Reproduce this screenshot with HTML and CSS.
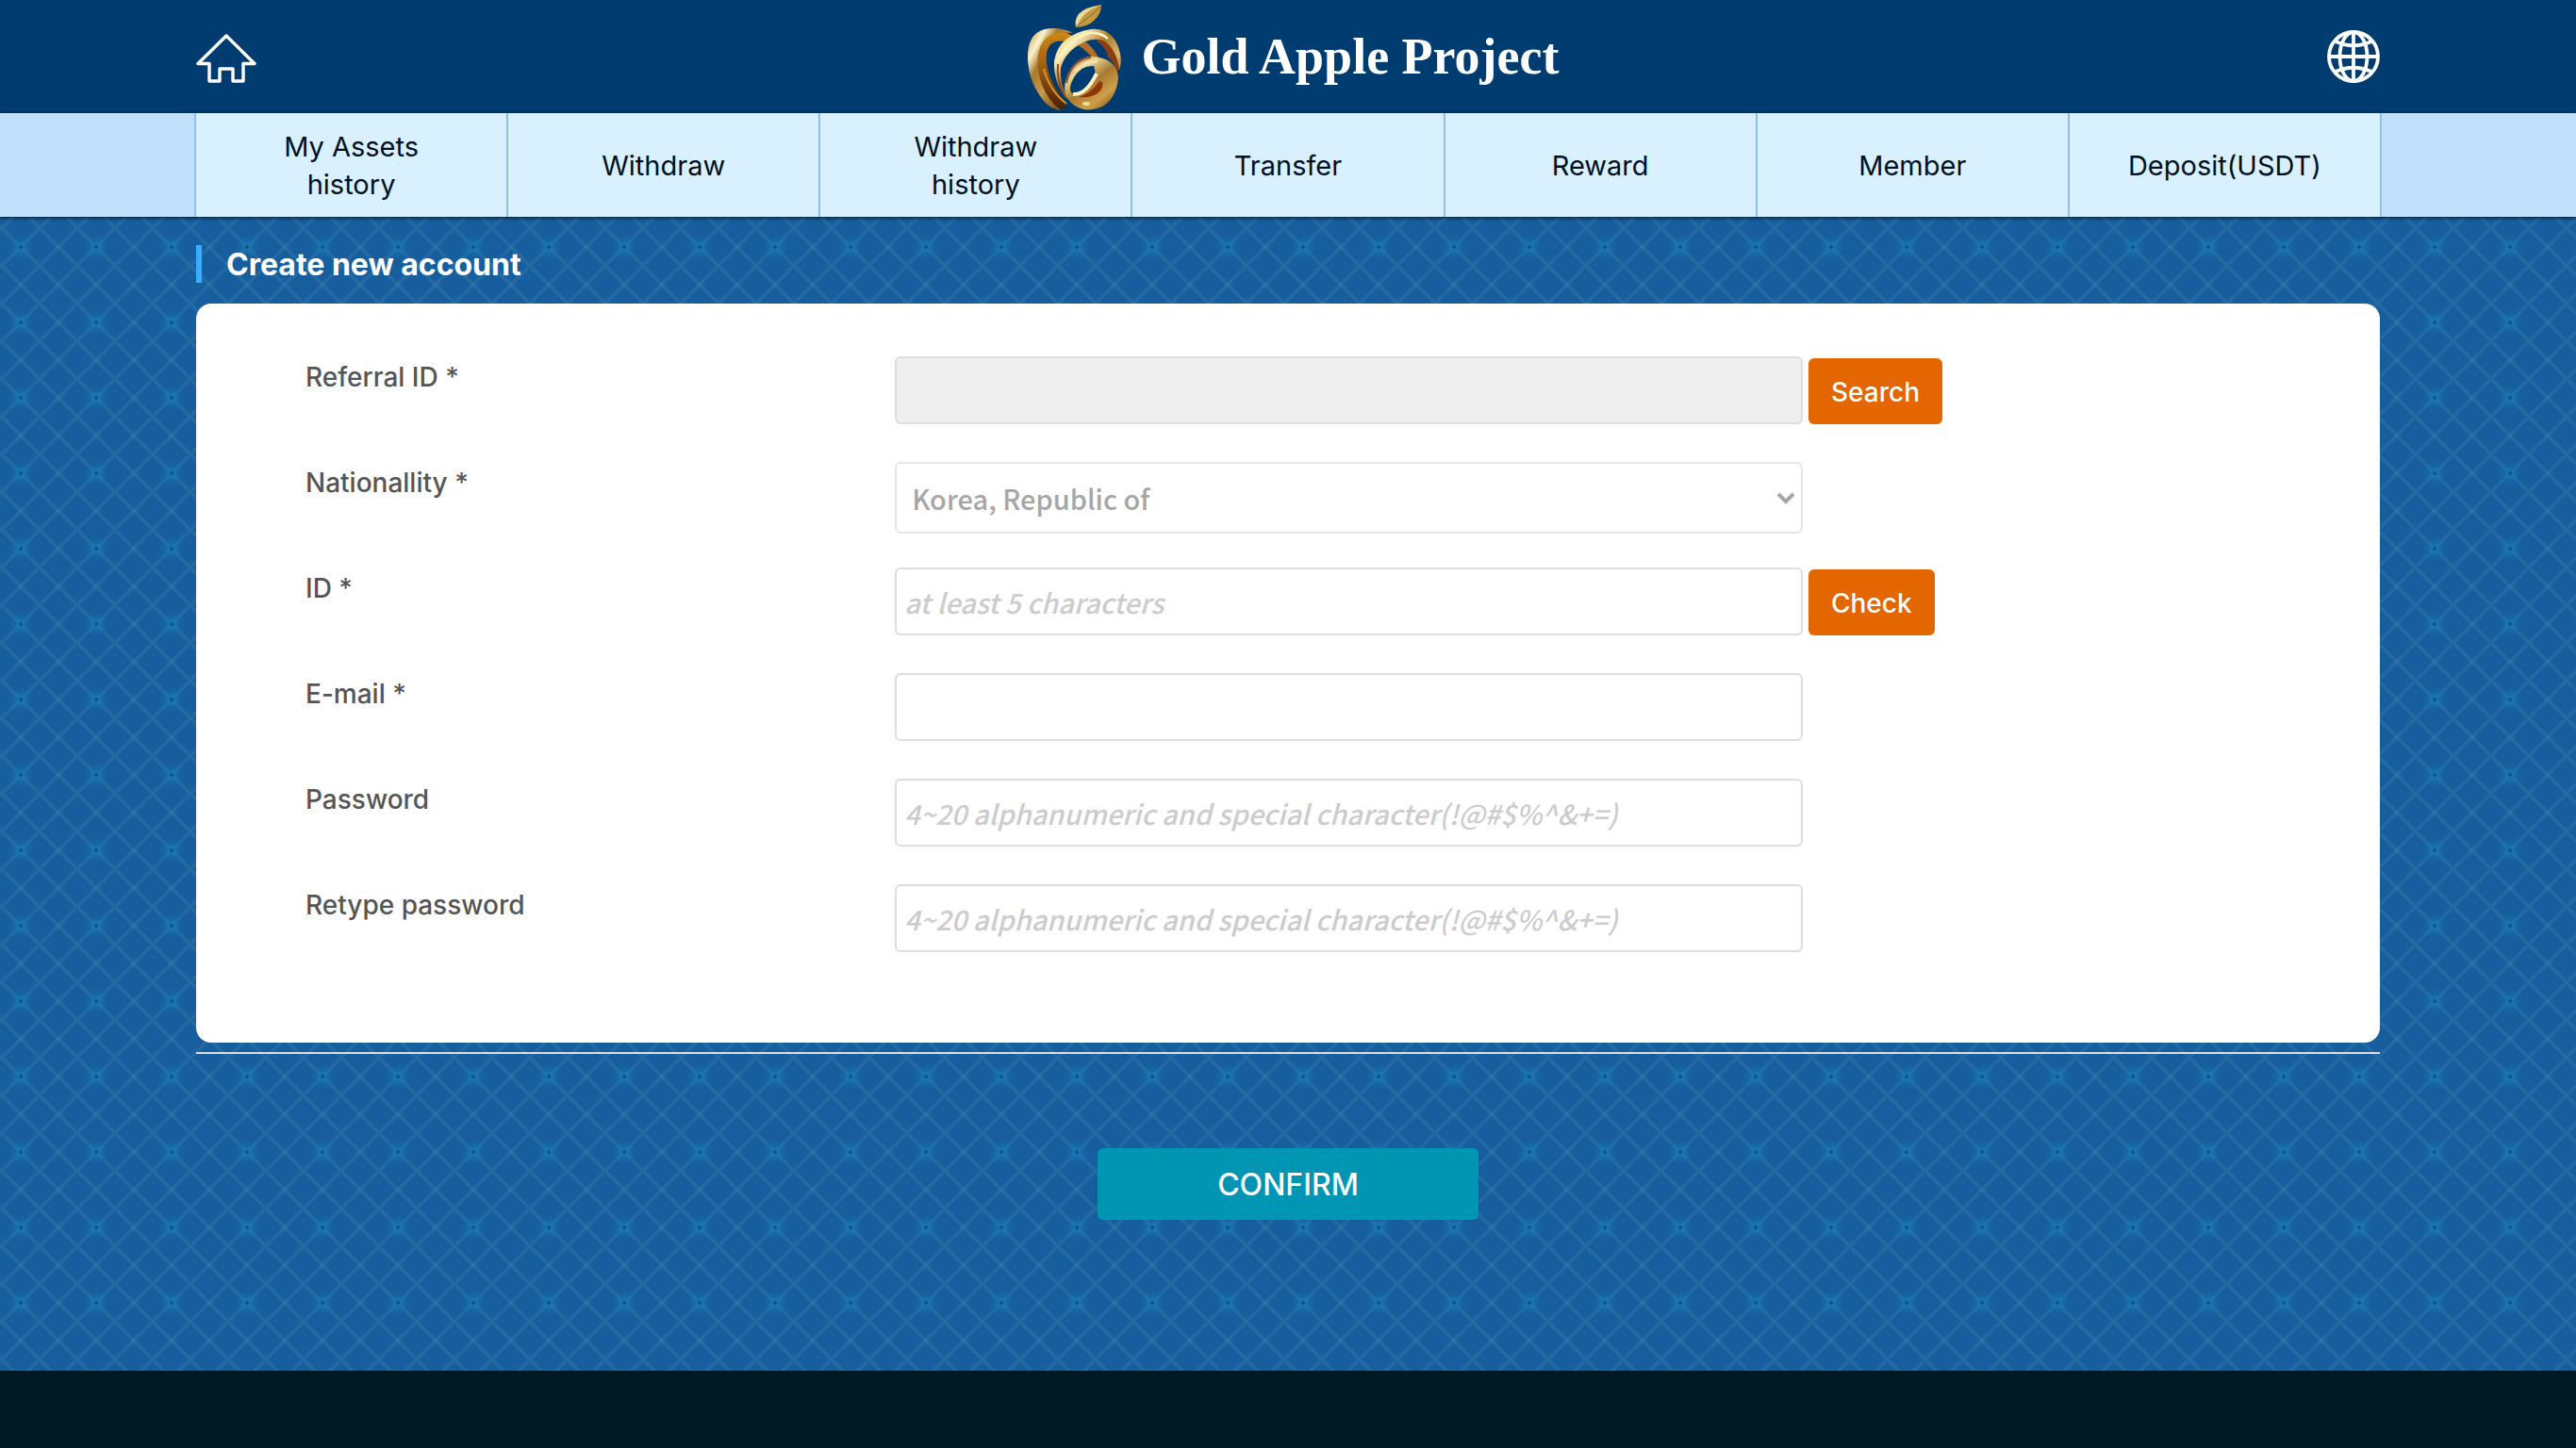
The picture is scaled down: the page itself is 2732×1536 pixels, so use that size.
FILE: index.html
```
<!DOCTYPE html>
<html lang="en">
<head>
    <meta charset="UTF-8">
    <meta name="viewport" content="width=device-width, initial-scale=1.0">
    <title>Gold Apple Project - Create new account</title>
    <link rel="stylesheet" href="styles.css">
</head>
<body>
    <header class="header">
        <a href="#" class="home-link" aria-label="Home">
            <svg width="64" height="52" viewBox="0 0 64 52" fill="none" stroke="#fff" stroke-width="3.4" stroke-linejoin="round">
                <path d="M32 2 L2 31.500 H14 V50 H25 V37 H39 V50 H50 V31.500 H62 Z"/>
            </svg>
        </a>
        <a href="#" class="logo">
            <svg class="logo-mark" width="140" height="120" viewBox="0 0 140 120">
                <defs>
                    <linearGradient id="goldLeft" x1="0" y1="0" x2="1" y2="1">
                        <stop offset="0" stop-color="#b98a3a"/>
                        <stop offset=".2" stop-color="#fff3cc"/>
                        <stop offset=".34" stop-color="#a9782b"/>
                        <stop offset=".55" stop-color="#c89a45"/>
                        <stop offset=".8" stop-color="#8a5417"/>
                        <stop offset="1" stop-color="#d9b364"/>
                    </linearGradient>
                    <linearGradient id="goldRight" x1="0" y1="0" x2="1" y2="1">
                        <stop offset="0" stop-color="#e8c878"/>
                        <stop offset=".25" stop-color="#fbeab6"/>
                        <stop offset=".45" stop-color="#a87a2e"/>
                        <stop offset=".65" stop-color="#dcb96c"/>
                        <stop offset="1" stop-color="#7a3c0c"/>
                    </linearGradient>
                    <linearGradient id="goldSmall" x1="0" y1="0" x2=".8" y2="1">
                        <stop offset="0" stop-color="#a8602a"/>
                        <stop offset=".3" stop-color="#ecd79a"/>
                        <stop offset=".55" stop-color="#a97a30"/>
                        <stop offset=".8" stop-color="#cfa04a"/>
                        <stop offset="1" stop-color="#8f5d1c"/>
                    </linearGradient>
                    <linearGradient id="goldDark" x1="0" y1="0" x2="0" y2="1">
                        <stop offset="0" stop-color="#d08a12"/>
                        <stop offset=".5" stop-color="#9a5a12"/>
                        <stop offset="1" stop-color="#4a1c06"/>
                    </linearGradient>
                </defs>
                <!-- leaf -->
                <path d="M97 5 Q80 7 73 15 Q68 22 70 29 Q83 28 89 22 Q97 15 97 5Z" fill="#c39a42"/>
                <path d="M96 6 Q78 11 71 28 Q68 22 73 15 Q80 8 96 6Z" fill="#efdc98"/>
                <path d="M96 7 Q85 18 71 28" fill="none" stroke="#8b6420" stroke-width="1"/>
                <!-- left ring -->
                <path d="M43 32 Q58 31 67 39 L60 44 Q41 41 39 57 Q36 78 58 108 L59 116 Q36 112 27 84 Q20 58 31 41Z" fill="url(#goldDark)"/>
                <path d="M67 35 Q53 28 37 31 Q18 36 19 62 Q20 88 36 107 Q43 116 54 117 Q41 107 34 90 Q26 67 32 50 Q37 37 51 35 Q59 34 67 35Z" fill="url(#goldLeft)"/>
                <path d="M36 73 Q42 96 60 110" fill="none" stroke="#d59a2c" stroke-width="2"/>
                <!-- right ring -->
                <path d="M71 47 L80 44 Q89 51 94 61 L88 62 Q82 54 71 47Z" fill="#b06f24"/>
                <path d="M98 37 Q115 47 117 73 L113 76 Q110 64 104 61 Q104 53 92 43Z" fill="#8a3f12"/>
                <path d="M86 31 Q111 29 117 57 Q119 66 116 74 Q114 54 101 44 Q91 39 78 45 Q59 54 54 72 Q52 85 61 105 Q46 88 47 65 Q51 37 86 31Z" fill="url(#goldRight)"/>
                <path d="M52 63 Q61 42 84 35 Q96 34 104 41" fill="none" stroke="#fff0c4" stroke-width="2.500"/>
                <path d="M51 68 Q49 86 59 103" fill="none" stroke="#954716" stroke-width="2"/>
                <!-- small ring -->
                <path d="M86 60 Q113 61 115 82 Q113 106 96 114 Q77 121 64 108 Q54 98 61 80 Q69 61 86 60Z M89 70 Q76 69 68 82 Q61 95 66 99 Q76 103 86 90 Q93 79 89 70Z" fill="url(#goldSmall)" fill-rule="evenodd"/>
                <path d="M95 86 Q101 87 97 95 Q89 105 73 103 Q86 99 95 86Z" fill="#8d3408"/>
                <path d="M67 100 Q81 101 92 78" fill="none" stroke="#fff0c0" stroke-width="4"/>
                <path d="M60 88 Q65 63 86 61" fill="none" stroke="#9a4a1c" stroke-width="2"/>
                <path d="M69 76 Q78 65 93 65" fill="none" stroke="#f4e3b0" stroke-width="3"/>
                <ellipse cx="81" cy="110" rx="4" ry="2" fill="#f3dc9c"/>
            </svg>
            <span class="logo-text">Gold Apple Project</span>
        </a>
        <button type="button" class="lang-btn" aria-label="Language">
            <svg width="56" height="56" viewBox="0 0 56 56" fill="none" stroke="#fff" stroke-width="3.8">
                <circle cx="28" cy="28" r="26"/>
                <ellipse cx="28" cy="28" rx="14.500" ry="26"/>
                <path d="M28 2 V54 M2 28 H54 M8 11.500 Q28 21 48 11.500 M8 44.500 Q28 35 48 44.500"/>
            </svg>
        </button>
    </header>

    <nav class="nav">
        <ul class="nav-list">
            <li><a href="#">My Assets<br>history</a></li>
            <li><a href="#">Withdraw</a></li>
            <li><a href="#">Withdraw<br>history</a></li>
            <li><a href="#">Transfer</a></li>
            <li><a href="#">Reward</a></li>
            <li><a href="#">Member</a></li>
            <li><a href="#">Deposit(USDT)</a></li>
        </ul>
    </nav>

    <main class="content">
        <h1 class="page-title">Create new account</h1>

        <form class="join-form">
            <div class="card">
                <div class="form-row">
                    <label for="referralId">Referral ID *</label>
                    <div class="field">
                        <input type="text" id="referralId" class="readonly" readonly>
                        <button type="button" class="side-btn">Search</button>
                    </div>
                </div>
                <div class="form-row">
                    <label for="nation">Nationallity *</label>
                    <div class="field">
                        <div class="select-wrap">
                            <select id="nation" disabled>
                                <option>Korea, Republic of</option>
                            </select>
                            <svg class="chevron" width="20" height="14" viewBox="0 0 20 14" fill="none" stroke="#a6a6a6" stroke-width="4">
                                <path d="M2 2 L10 10 L18 2"/>
                            </svg>
                        </div>
                    </div>
                </div>
                <div class="form-row">
                    <label for="userId">ID *</label>
                    <div class="field">
                        <input type="text" id="userId" placeholder="at least 5 characters">
                        <button type="button" class="side-btn">Check</button>
                    </div>
                </div>
                <div class="form-row">
                    <label for="email">E-mail *</label>
                    <div class="field">
                        <input type="email" id="email">
                    </div>
                </div>
                <div class="form-row">
                    <label for="password">Password</label>
                    <div class="field">
                        <input type="password" id="password" placeholder="4~20 alphanumeric and special character(!@#$%^&amp;+=)">
                    </div>
                </div>
                <div class="form-row">
                    <label for="password2">Retype password</label>
                    <div class="field">
                        <input type="password" id="password2" placeholder="4~20 alphanumeric and special character(!@#$%^&amp;+=)">
                    </div>
                </div>
            </div>
            <hr class="divider">
            <button type="submit" class="confirm-btn">CONFIRM</button>
        </form>
    </main>

    <footer class="footer"></footer>
</body>
</html>
```
FILE: styles.css
```
* {
    box-sizing: border-box;
}
body {
    margin: 0;
    min-height: 100vh;
    display: flex;
    flex-direction: column;
    font-family: Inter, 'Noto Sans', sans-serif;
    font-size: 28px;
    line-height: 40px;
    /* glowing dots every 80px on a 40px diamond lattice */
    background-color: #165e9e;
    background-image:
        radial-gradient(circle, #1d4a70 1px, rgba(16, 126, 188, 0.7) 3px, rgba(16, 126, 188, 0.3) 7px, rgba(16, 126, 188, 0) 13px),
        linear-gradient(45deg, transparent calc(50% - 3px), rgba(110, 165, 190, 0.2) 50%, transparent calc(50% + 3px)),
        linear-gradient(-45deg, transparent calc(50% - 3px), rgba(110, 165, 190, 0.2) 50%, transparent calc(50% + 3px));
    background-size: 80px 80px, 40px 40px, 40px 40px;
    background-position: -18px -18px, 2px 2px, 2px 2px;
}
a {
    color: inherit;
    text-decoration: none;
}
button {
    font-family: inherit;
    border: 0;
    cursor: pointer;
}

/* Header */
.header {
    display: grid;
    grid-template-columns: 1fr auto 1fr;
    align-items: center;
    height: 120px;
    padding: 0 208px;
    background-color: #003c70;
}
.header svg {
    display: block;
}
.home-link {
    justify-self: start;
    padding-top: 4px;
}
.lang-btn {
    justify-self: end;
    padding: 0;
    background: none;
}
.logo {
    display: flex;
    align-items: center;
    padding-right: 8px;
}
.logo-text {
    color: white;
    font-family: 'Liberation Serif', serif;
    font-size: 54px;
    font-weight: bold;
    line-height: 64px;
}

/* Menu */
.nav {
    padding: 0 206px;
    background-color: #c1e0fc;
    box-shadow: 0 1px 4px rgba(0, 0, 0, 0.8);
}
.nav-list {
    display: grid;
    grid-template-columns: repeat(7, 1fr);
    margin: 0;
    padding: 0;
    list-style: none;
    border-left: 2px solid #90bfee;
}
.nav-list a {
    display: flex;
    align-items: center;
    justify-content: center;
    height: 110px;
    padding-top: 2px;
    color: #00101e;
    font-size: 29px;
    text-align: center;
    background-color: #d8f0ff;
    border-right: 2px solid #90bfee;
}

/* Content */
.content {
    flex: 1;
    padding: 30px 208px 160px;
}
.page-title {
    margin: 0 0 22px;
    padding: 2px 0 0 26px;
    color: white;
    font-size: 32px;
    font-weight: bold;
    line-height: 38px;
    border-left: 6px solid #38aeff;
}
.card {
    padding: 56px 116px;
    background-color: white;
    border-radius: 16px;
}
.form-row {
    display: grid;
    grid-template-columns: 30% 70%;
    height: 112px;
}
.form-row label {
    padding-top: 2px;
    color: #555;
    font-weight: 500;
}
.field {
    display: flex;
    align-self: start;
    align-items: flex-end;
    gap: 6px;
}
.field input, .field select {
    font-family: 'Noto Sans CJK KR', sans-serif;
    font-size: 29px;
    font-weight: 500;
    background-color: white;
    border: 2px solid #ddd;
    border-radius: 6px;
}
.field input {
    width: 66%;
    height: 72px;
    padding: 0 8px;
}
.field input::placeholder {
    color: #ccc;
    font-style: italic;
}
.field input.readonly {
    background-color: #efefef;
}
.select-wrap {
    position: relative;
    width: 66%;
}
.field select {
    display: block;
    width: 100%;
    height: 76px;
    padding: 0 16px;
    color: #a6a6a6;
    border-color: #e6e6e6;
    opacity: 1;
    appearance: none;
}
.chevron {
    position: absolute;
    right: 8px;
    top: 32px;
    pointer-events: none;
}
.side-btn {
    height: 70px;
    padding: 2px 24px 0;
    color: white;
    font-size: 28px;
    font-weight: 500;
    background-color: #e36600;
    border-radius: 6px;
}
.divider {
    height: 2px;
    margin: 10px 0 100px;
    background-color: #ddd;
    border: 0;
}
.confirm-btn {
    display: block;
    width: 404px;
    height: 76px;
    margin: 0 auto;
    color: white;
    font-size: 32px;
    font-weight: 500;
    background-color: #0095b3;
    border-radius: 6px;
}

/* Footer */
.footer {
    height: 82px;
    background-color: #001925;
}
```
